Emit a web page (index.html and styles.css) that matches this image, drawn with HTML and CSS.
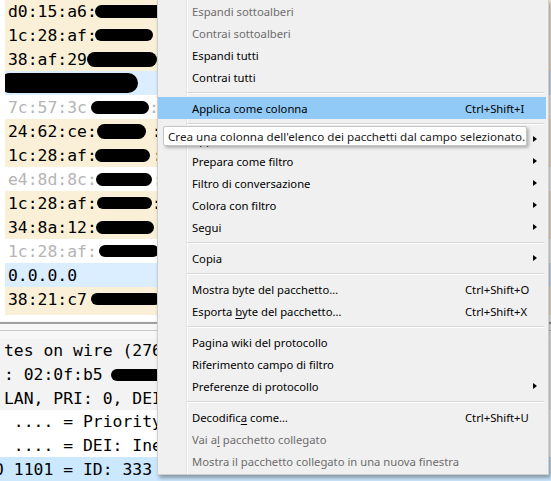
FILE: index.html
```html
<!DOCTYPE html>
<html lang="it">
<head>
<meta charset="utf-8">
<title>Wireshark menu</title>
<link rel="stylesheet" href="styles.css">
</head>
<body>
<div class="app">
  <div class="plist">
    <div class="row arp"><span>d0:15:a6:</span><span class="blob b1"></span></div>
    <div class="row arp"><span>1c:28:af:</span><span class="blob b2"></span></div>
    <div class="row arp"><span>38:af:29</span><span class="blob b3"></span></div>
    <div class="row udp"><span class="blob b4"></span></div>
    <div class="row plain"><span>7c:57:3c</span><span class="blob b5"></span><span>:</span></div>
    <div class="row arp"><span>24:62:ce:</span><span class="blob b6"></span><span>:</span></div>
    <div class="row arp"><span>1c:28:af:</span><span class="blob b7"></span><span>:</span></div>
    <div class="row plain"><span>e4:8d:8c:</span><span class="blob b8"></span><span>:</span></div>
    <div class="row arp"><span>1c:28:af:</span><span class="blob b9"></span><span>:</span></div>
    <div class="row arp"><span>34:8a:12:</span><span class="blob b10"></span><span>:</span></div>
    <div class="row plain"><span>1c:28:af:</span><span class="blob b11"></span></div>
    <div class="row udp"><span>0.0.0.0</span></div>
    <div class="row arp"><span>38:21:c7</span><span class="blob b13"></span></div>
    <div class="row arp"></div>
  </div>
  <div class="split"></div>
  <div class="details">
    <div class="drow parent"><span>tes on wire (2768 bits)</span></div>
    <div class="drow parent"><span>: 02:0f:b5</span><span class="blob b14"></span></div>
    <div class="drow parent"><span>LAN, PRI: 0, DEI: 0, ID: 333</span></div>
    <div class="drow"><span> .... = Priority: Best Effort</span></div>
    <div class="drow"><span> .... = DEI: Ineligible</span></div>
    <div class="drow sel"><span class="cut">0 1101 = ID: 333</span></div>
  </div>
</div>

<div class="menu">
  <div class="item dis"><span class="label">Espandi sottoalberi</span></div>
  <div class="item dis"><span class="label">Contrai sottoalberi</span></div>
  <div class="item"><span class="label">Espandi tutti</span></div>
  <div class="item"><span class="label">Contrai tutti</span></div>
  <div class="sep"></div>
  <div class="item hot"><span class="label">Applica come colonna</span><span class="key">Ctrl+Shift+I</span></div>
  <div class="sep"></div>
  <div class="item"><span class="label">Applica come filtro</span><span class="arrow"></span></div>
  <div class="item"><span class="label">Prepara come filtro</span><span class="arrow"></span></div>
  <div class="item"><span class="label">Filtro di conversazione</span><span class="arrow"></span></div>
  <div class="item"><span class="label">Colora con filtro</span><span class="arrow"></span></div>
  <div class="item"><span class="label">Segui</span><span class="arrow"></span></div>
  <div class="sep"></div>
  <div class="item"><span class="label">Copia</span><span class="arrow"></span></div>
  <div class="sep"></div>
  <div class="item"><span class="label">Mostra byte del pacchetto…</span><span class="key">Ctrl+Shift+O</span></div>
  <div class="item"><span class="label">Esporta <u>b</u>yte del pacchetto…</span><span class="key">Ctrl+Shift+X</span></div>
  <div class="sep"></div>
  <div class="item"><span class="label">Pagina wiki del protocollo</span></div>
  <div class="item"><span class="label">Riferimento campo di filtro</span></div>
  <div class="item"><span class="label">Preferenze di protocollo</span><span class="arrow"></span></div>
  <div class="sep"></div>
  <div class="item"><span class="label">Decodific<u>a</u> come…</span><span class="key">Ctrl+Shift+U</span></div>
  <div class="item dis"><span class="label">Vai a<u>l</u> pacchetto collegato</span></div>
  <div class="item dis"><span class="label">Mostra il pacchetto collegato in una nuova finestra</span></div>
</div>

<div class="tooltip">Crea una colonna dell'elenco dei pacchetti dal campo selezionato.</div>
</body>
</html>
```

FILE: styles.css
```css
* { box-sizing: border-box; }
html, body { margin: 0; padding: 0; }
body {
  width: 551px;
  height: 481px;
  overflow: hidden;
  position: relative;
  background: #ffffff;
  font-family: "Noto Sans", "Open Sans", sans-serif;
}

/* ---------- background application ---------- */
.app { padding-left: 5px; }

.plist {
  height: 316px;
  margin-top: -1px;
  overflow: hidden;
  font-family: "DejaVu Sans Mono", monospace;
  font-size: 16.4px;
}
.row {
  height: 24px;
  display: flex;
  align-items: center;
  padding-left: 3px;
  white-space: nowrap;
  color: #000;
}
.arp { background: #faf0d7; }
.udp { background: #daeeff; }
.plain { background: #ffffff; color: #b4b4b4; }

.blob {
  display: inline-block;
  background: #000;
  border-radius: 8px;
  height: 13px;
  flex: none;
}
.b1 { width: 70px; height: 13px; margin-left: -2px; }
.b2 { width: 58px; height: 12px; margin-left: -2px; }
.b3 { width: 70px; height: 15px; margin-left: 0; }
.b4 { width: 138px; height: 20px; margin-left: -8px; border-radius: 10px; }
.b5 { width: 58px; height: 13px; margin-left: 4px; }
.b6 { width: 49px; height: 15px; margin-left: 0; margin-right: 6px; }
.b7 { width: 55px; height: 13px; margin-left: -2px; margin-right: 3px; }
.b8 { width: 56px; height: 13px; margin-left: -1px; margin-right: 1px; }
.b9 { width: 55px; height: 12px; margin-left: 0; }
.b10 { width: 58px; height: 13px; margin-left: -1px; }
.b11 { width: 60px; height: 12px; margin-left: 2px; }
.b13 { width: 70px; height: 12px; margin-left: 4px; }
.b14 { width: 60px; height: 12px; margin-left: 8px; }

.split {
  height: 24px;
  margin-left: -5px;
  border-top: 6px solid #ffffff;
  background:
    linear-gradient(#a0a0a0, #a0a0a0) 0 1px / 100% 2px no-repeat,
    linear-gradient(#c8c8c8, #c8c8c8) 0 9px / 100% 1px no-repeat,
    #f7f7f7;
}
.details {
  margin-left: -5px;
  font-family: "DejaVu Sans Mono", monospace;
  font-size: 16.4px;
}
.drow {
  height: 23.7px;
  display: flex;
  align-items: center;
  padding-left: 4px;
  white-space: pre;
  color: #000;
}
.drow.parent { background: #f3f3f3; }
.drow.sel { background: #cce8ff; }
.cut { margin-left: -9.9px; }

/* ---------- context menu ---------- */
.menu {
  position: absolute;
  left: 157px;
  top: -1px;
  width: 392px;
  padding: 0 2px 2px 0;
  background:
    linear-gradient(#e3e3e3, #e3e3e3) 28px 0 / 1px 100% no-repeat,
    linear-gradient(#ffffff, #ffffff) 29px 0 / 1px 100% no-repeat,
    #f0f0f0;
  border: 1px solid #cfcfcf;
  box-shadow: 2px 3px 4px rgba(0, 0, 0, 0.35);
  font-size: 11.25px;
  color: #000;
}
.item {
  height: 22px;
  display: flex;
  align-items: center;
  padding-left: 34px;
  white-space: nowrap;
}
.item.dis { color: #6d6d6d; }
.item.hot { background: #91c9f7; }
.label { width: 273px; flex: none; }
.key { flex: none; }
.arrow {
  margin-left: auto;
  margin-right: 9px;
  width: 0;
  height: 0;
  border-top: 3.5px solid transparent;
  border-bottom: 3.5px solid transparent;
  border-left: 4px solid #000;
}
.sep {
  height: 9px;
  margin-left: 29px;
  margin-right: 2px;
  background:
    linear-gradient(#d7d7d7, #d7d7d7) 0 4px / 100% 1px no-repeat,
    linear-gradient(#ffffff, #ffffff) 0 5px / 100% 1px no-repeat;
}
u { text-decoration-thickness: 1px; text-underline-offset: 2px; }

/* ---------- tooltip ---------- */
.tooltip {
  position: absolute;
  left: 163px;
  top: 126px;
  width: 364px;
  height: 20px;
  padding-left: 4px;
  display: flex;
  align-items: center;
  background: #ffffff;
  border: 1px solid #c4c4c4;
  border-radius: 2px;
  box-shadow: 2px 2px 3px rgba(0, 0, 0, 0.25);
  font-size: 11.65px;
  color: #1a1a1a;
  white-space: nowrap;
}
```
